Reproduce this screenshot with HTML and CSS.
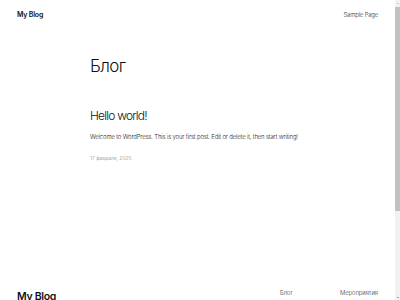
FILE: index.html
```html
<!DOCTYPE html>
<html lang="ru">
<head>
<meta charset="utf-8">
<title>My Blog</title>
<link rel="stylesheet" href="styles.css">
</head>
<body>
<div class="viewport">
  <div class="page">
    <header class="site-header">
      <a class="site-title" href="#">My Blog</a>
      <nav class="nav"><a href="#">Sample Page</a></nav>
    </header>
    <main class="main">
      <div class="column">
        <h1 class="page-title">Блог</h1>
        <article class="post">
          <h2 class="post-title">Hello world!</h2>
          <p class="post-excerpt">Welcome to WordPress. This is your first post. Edit or delete it, then start writing!</p>
          <div class="post-date">17 февраля, 2025</div>
        </article>
      </div>
    </main>
    <footer class="site-footer">
      <a class="footer-title" href="#">My Blog</a>
      <nav class="footer-nav">
        <a href="#">Блог</a>
        <a href="#">Мероприятия</a>
      </nav>
    </footer>
  </div>
  <div class="scrollbar" aria-hidden="true">
    <div class="sb-btn"><span class="sb-arrow up"></span></div>
    <div class="sb-track"><div class="sb-thumb"></div></div>
    <div class="sb-btn"><span class="sb-arrow down"></span></div>
  </div>
</div>
</body>
</html>
```
FILE: styles.css
```css
html, body {
  margin: 0;
  height: 300px;
  overflow: hidden;
  background: #fff;
}
body {
  font-family: Inter, "Noto Sans", sans-serif;
  color: #111;
}
a {
  color: inherit;
  text-decoration: none;
}
.viewport {
  display: flex;
  height: 300px;
}
.page {
  flex: 1;
  min-width: 0;
  height: 300px;
  overflow: hidden;
}
.site-header {
  display: flex;
  justify-content: space-between;
  align-items: center;
  height: 28px;
  padding: 0 17px;
}
.site-title {
  font-size: 7px;
  font-weight: 600;
  letter-spacing: -0.2px;
}
.nav {
  font-size: 6px;
  font-weight: 300;
  letter-spacing: -0.2px;
  color: #333;
}
.main {
  padding: 0 17px;
}
.column {
  width: 215px;
  margin: 0 auto;
}
.page-title {
  margin: 26px 0 0;
  font-size: 17px;
  line-height: 24px;
  font-weight: 300;
  letter-spacing: -0.6px;
}
.post {
  margin-top: 30px;
}
.post-title {
  margin: 0;
  font-size: 12px;
  line-height: 16px;
  font-weight: 300;
  letter-spacing: -0.8px;
}
.post-excerpt {
  margin: 8px 0 0;
  font-size: 6px;
  line-height: 9px;
  font-weight: 300;
  letter-spacing: -0.18px;
  color: #222;
}
.post-date {
  margin-top: 14px;
  font-size: 5px;
  line-height: 7px;
  font-weight: 300;
  color: #888;
}
.site-footer {
  display: flex;
  justify-content: space-between;
  align-items: flex-start;
  margin-top: 126px;
  padding: 0 17px;
}
.footer-title {
  font-size: 10.5px;
  font-weight: 600;
  letter-spacing: -0.3px;
  padding-top: 2px;
}
.footer-nav {
  display: flex;
  gap: 47px;
  font-size: 5.8px;
  font-weight: 300;
  color: #333;
  padding-top: 1px;
}
.scrollbar {
  width: 5px;
  display: flex;
  flex-direction: column;
  background: #f1f1f1;
}
.sb-btn {
  height: 6px;
  display: flex;
  align-items: center;
  justify-content: center;
}
.sb-arrow {
  width: 0;
  height: 0;
  border-left: 1.5px solid transparent;
  border-right: 1.5px solid transparent;
}
.sb-arrow.up {
  border-bottom: 1.5px solid #a3a3a3;
}
.sb-arrow.down {
  border-top: 1.5px solid #505050;
}
.sb-track {
  flex: 1;
}
.sb-thumb {
  height: 204px;
  margin-top: 1px;
  background: #c1c1c1;
}
```
